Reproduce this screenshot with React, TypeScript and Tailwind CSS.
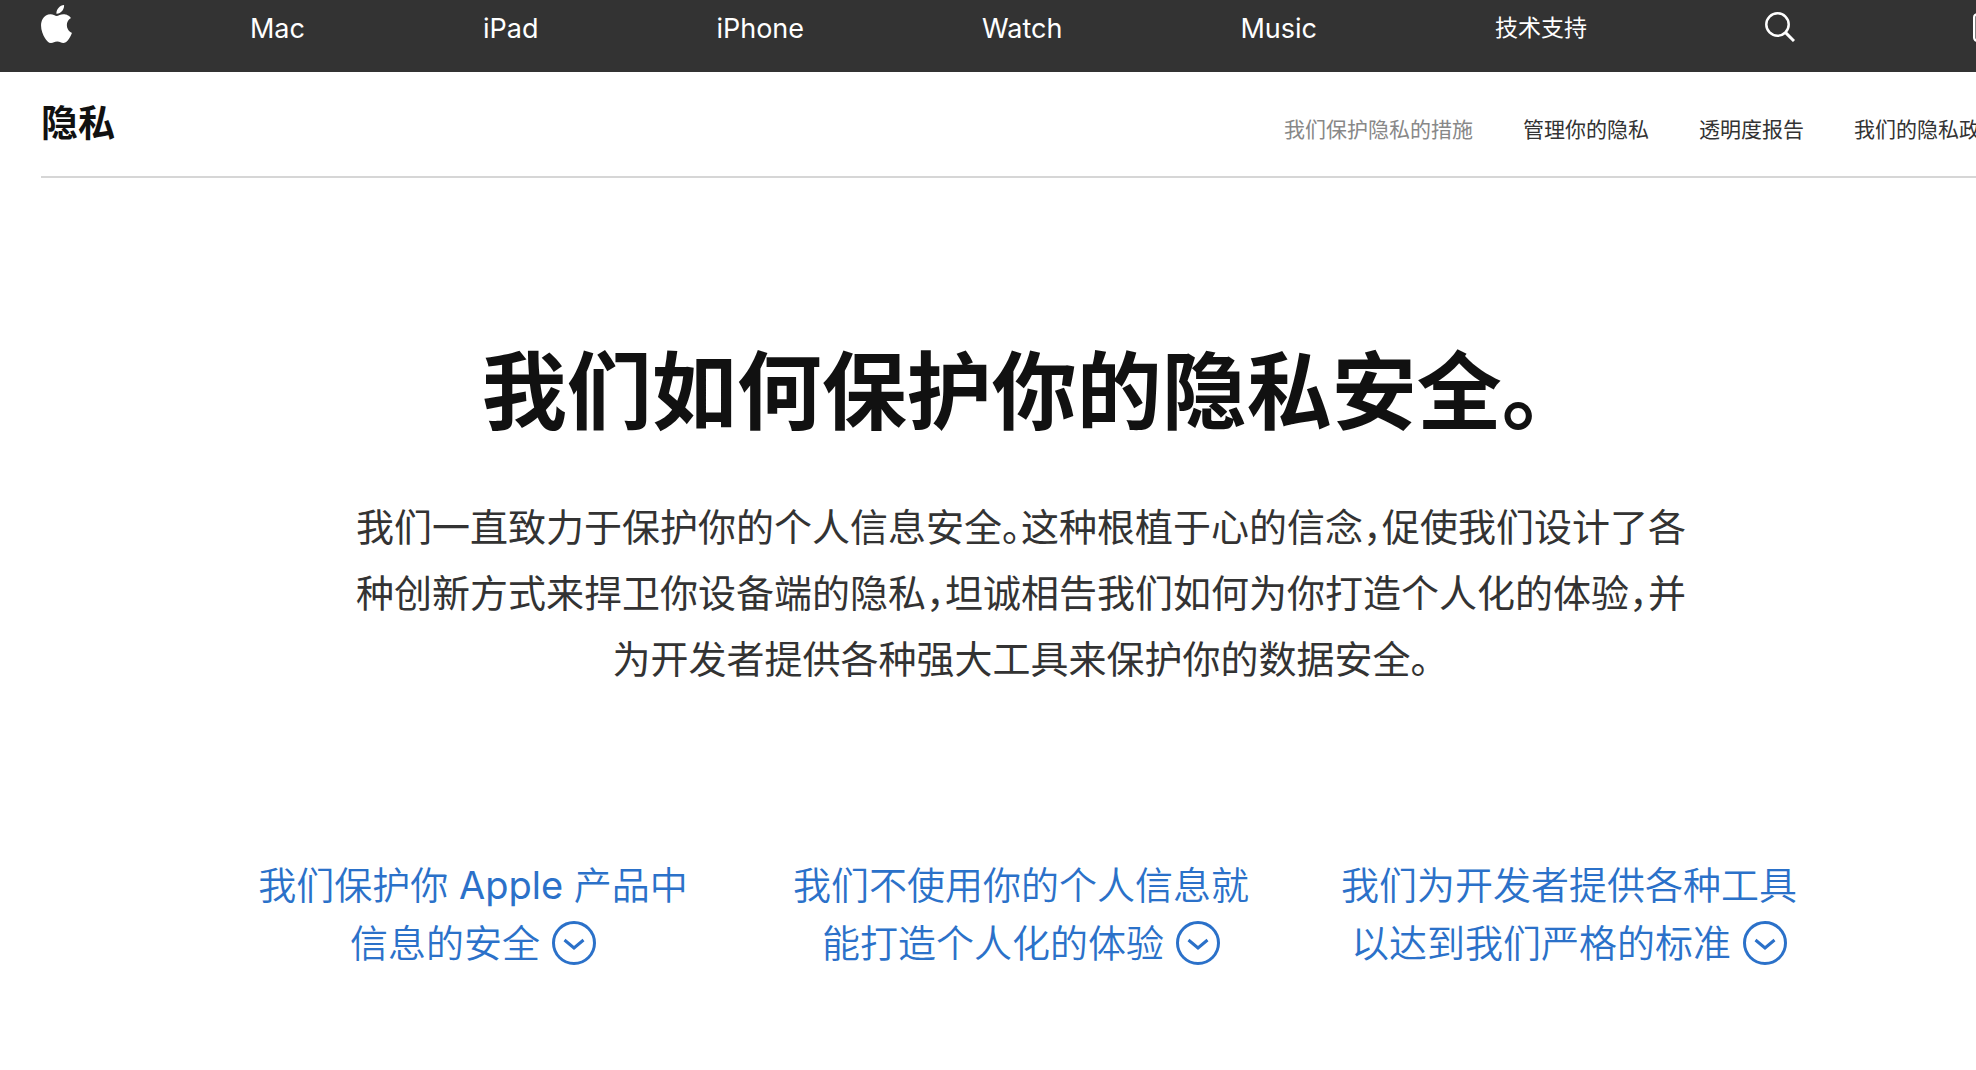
import React from "react";

const navItems = ["Mac", "iPad", "iPhone", "Watch", "Music"];

const subNav = [
  { label: "我们保护隐私的措施", current: true },
  { label: "管理你的隐私", current: false },
  { label: "透明度报告", current: false },
  { label: "我们的隐私政策", current: false },
];

const topics = [
  {
    id: "products",
    first: (
      <>
        我们保护你 <span className="font-normal">Apple</span> 产品中
      </>
    ),
    second: "信息的安全",
  },
  { id: "personalization", first: "我们不使用你的个人信息就", second: "能打造个人化的体验" },
  { id: "developers", first: "我们为开发者提供各种工具", second: "以达到我们严格的标准" },
];

function AppleLogo() {
  return (
    <svg viewBox="2.2 0 19.6 24" className="h-[38px] w-[31px]" fill="currentColor" aria-hidden="true">
      <path d="M12.152 6.896c-.948 0-2.415-1.078-3.96-1.04-2.04.027-3.91 1.183-4.961 3.014-2.117 3.675-.546 9.103 1.519 12.09 1.013 1.454 2.208 3.09 3.792 3.039 1.52-.065 2.09-.987 3.935-.987 1.831 0 2.35.987 3.96.948 1.637-.026 2.676-1.48 3.676-2.948 1.156-1.688 1.636-3.325 1.662-3.415-.039-.013-3.182-1.221-3.22-4.857-.026-3.04 2.48-4.494 2.597-4.559-1.429-2.09-3.623-2.324-4.39-2.376-2-.156-3.675 1.09-4.61 1.09zM15.53 3.83c.843-1.012 1.4-2.427 1.245-3.83-1.207.052-2.662.805-3.532 1.818-.78.896-1.454 2.338-1.273 3.714 1.338.104 2.715-.688 3.559-1.701" />
    </svg>
  );
}

function SearchIcon() {
  return (
    <svg viewBox="0 0 30 30" className="size-[30px]" fill="none" stroke="currentColor" aria-hidden="true">
      <circle cx="12.5" cy="12.5" r="11.2" strokeWidth="2.5" />
      <path d="M20.6 20.6 29 29" strokeWidth="3" />
    </svg>
  );
}

function BagIcon() {
  return (
    <svg viewBox="0 0 28 36" className="h-9 w-7" fill="none" stroke="currentColor" strokeWidth="2.4" aria-hidden="true">
      <rect x="1.2" y="8.2" width="25.6" height="26.6" rx="3" />
      <path d="M8.5 8V6.5a5.5 5.5 0 0 1 11 0V8" />
    </svg>
  );
}

function CircleChevron() {
  return (
    <svg viewBox="0 0 44 44" className="size-11" fill="none" stroke="currentColor" strokeWidth="3" aria-hidden="true">
      <circle cx="22" cy="22" r="20.5" />
      <path d="m12.5 19 9.5 8 9.5-8" />
    </svg>
  );
}

export default function App() {
  return (
    <div className="overflow-hidden bg-white font-['Inter','Noto_Sans_CJK_SC',sans-serif] text-[#111111]" lang="zh-CN">
      <div className="min-w-[2042px]">
        <nav className="h-[72px] bg-[#333333] text-white" aria-label="全局导航">
          <ul className="flex h-14 items-center justify-between px-[41px] text-[27px]">
            <li>
              <a href="#apple" aria-label="Apple" className="block pb-2">
                <AppleLogo />
              </a>
            </li>
            {navItems.map((item) => (
              <li key={item}>
                <a href={"#" + item} className="block pt-0.5">{item}</a>
              </li>
            ))}
            <li>
              <a href="#support" className="block text-[23px]">技术支持</a>
            </li>
            <li>
              <button type="button" aria-label="搜索" className="block pb-0.5">
                <SearchIcon />
              </button>
            </li>
            <li>
              <button type="button" aria-label="购物袋" className="block pb-2">
                <BagIcon />
              </button>
            </li>
          </ul>
        </nav>

        <header className="mx-[41px] flex h-[106px] items-center justify-between border-b-2 border-[#d6d6d6]">
          <a href="#privacy" className="text-[37px] font-bold">隐私</a>
          <ul className="flex gap-[50px] pt-3 text-[21px] text-[#333333]">
            {subNav.map(({ label, current }) => (
              <li key={label}>
                <a
                  href={"#" + label}
                  aria-current={current ? "page" : undefined}
                  className={current ? "text-[#888888]" : ""}
                >
                  {label}
                </a>
              </li>
            ))}
          </ul>
        </header>

        <main className="pt-[164px] pb-[98px] text-center">
          <h1 className="pr-4 text-[85px] leading-[102px] font-bold [font-feature-settings:'halt']">
            我们如何保护你的隐私安全。
          </h1>
          <p className="mt-[50px] text-[38px] leading-[66px] text-[#333333] [font-feature-settings:'halt']">
            我们一直致力于保护你的个人信息安全。这种根植于心的信念，促使我们设计了各
            <br />
            种创新方式来捍卫你设备端的隐私，坦诚相告我们如何为你打造个人化的体验，并
            <br />
            为开发者提供各种强大工具来保护你的数据安全。
          </p>
          <ul className="mx-auto mt-[164px] grid w-[1644px] grid-cols-3 text-[38px] leading-[58px] font-[350] text-[#2b71c9]">
            {topics.map(({ id, first, second }) => (
              <li key={id}>
                <a href={"#" + id} className="block">
                  {first}
                  <span className="flex items-center justify-center gap-3">
                    {second}
                    <CircleChevron />
                  </span>
                </a>
              </li>
            ))}
          </ul>
        </main>
      </div>
    </div>
  );
}
